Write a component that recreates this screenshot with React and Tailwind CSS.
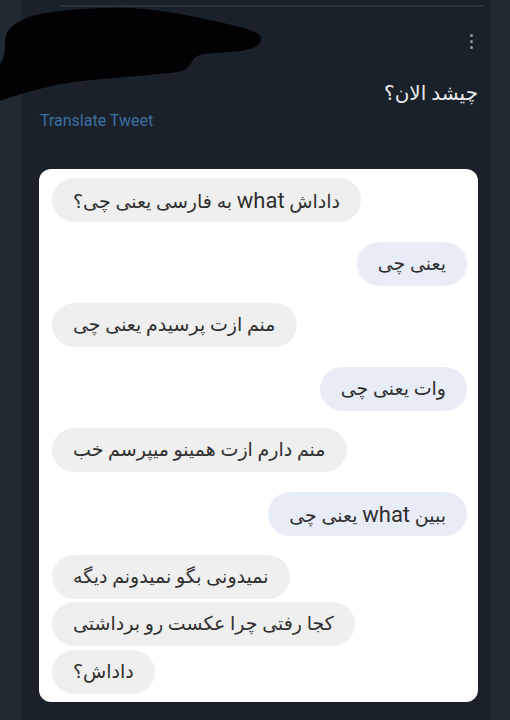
import React from "react";

const font = { fontFamily: 'Roboto, "DejaVu Sans", "Noto Sans", sans-serif' };

function W() {
  return <span className="text-[22px]">what</span>;
}

function Bubble({ children, side, mt }) {
  const left = side === "left";
  return (
    <div className={`flex ${left ? "justify-start" : "justify-end"} ${mt}`}>
      <div
        dir="rtl"
        className={`h-[44px] rounded-full px-[21px] flex items-center text-[19px] text-[#2f2f2f] whitespace-nowrap ${
          left ? "bg-[#efefef]" : "bg-[#e8ecf6]"
        }`}
      >
        <span>{children}</span>
      </div>
    </div>
  );
}

export default function App() {
  return (
    <div className="w-[510px] h-[720px] bg-[#1a212a] flex overflow-hidden" style={font}>
      <div className="w-[22px] bg-[#212932]" />
      <div className="flex-1 relative flex flex-col">
        <div className="mt-[5px] ml-[38px] mr-[6px] h-[2px] bg-[#29313b]" />
        {/* scribble overlay */}
        <svg
          className="absolute left-[-22px] top-0"
          width="280"
          height="110"
          viewBox="0 0 280 110"
        >
          <path
            d="M7 33 C12 24 22 18 40 14 C70 9 100 7 130 8 C170 10 210 20 240 27 C256 31 262 35 261 40 C260 47 250 51 230 52 C210 53 198 54 194 58 C191 64 188 70 178 72 C150 75 110 78 80 81 C50 85 25 92 0 101 L0 64 C4 58 5 52 5 45 C5 40 6 36 7 33 Z"
            fill="#020204"
          />
        </svg>
        {/* dots */}
        <div className="flex justify-end mr-[17px] mt-[27px]">
          <div className="flex flex-col gap-[3px]">
            <div className="w-[3px] h-[3px] rounded-full bg-[#8b96a2]" />
            <div className="w-[3px] h-[3px] rounded-full bg-[#8b96a2]" />
            <div className="w-[3px] h-[3px] rounded-full bg-[#8b96a2]" />
          </div>
        </div>
        <div dir="rtl" className="mr-[12px] mt-[32px] text-[20px] leading-[24px] text-[#e7e9ea]">
          چیشد الان؟
        </div>
        <div className="ml-[18px] mt-[7px] text-[16px] leading-[18px] text-[#3a70a3]">
          Translate Tweet
        </div>
        <div className="ml-[17px] mr-[12px] mt-[39px] h-[533px] bg-white rounded-[12px] px-[13px] pt-[9px] pr-[11px] flex flex-col">
          <Bubble side="left" mt="">
            داداش <W /> به فارسی یعنی چی؟
          </Bubble>
          <Bubble side="right" mt="mt-[20px]">یعنی چی</Bubble>
          <Bubble side="left" mt="mt-[17px]">منم ازت پرسیدم یعنی چی</Bubble>
          <Bubble side="right" mt="mt-[20px]">وات یعنی چی</Bubble>
          <Bubble side="left" mt="mt-[17px]">منم دارم ازت همینو میپرسم خب</Bubble>
          <Bubble side="right" mt="mt-[20px]">
            ببین <W /> یعنی چی
          </Bubble>
          <Bubble side="left" mt="mt-[19px]">نمیدونی بگو نمیدونم دیگه</Bubble>
          <Bubble side="left" mt="mt-[3px]">کجا رفتی چرا عکست رو برداشتی</Bubble>
          <Bubble side="left" mt="mt-[4px]">داداش؟</Bubble>
        </div>
      </div>
      <div className="w-[20px] bg-[#212932]" />
    </div>
  );
}
